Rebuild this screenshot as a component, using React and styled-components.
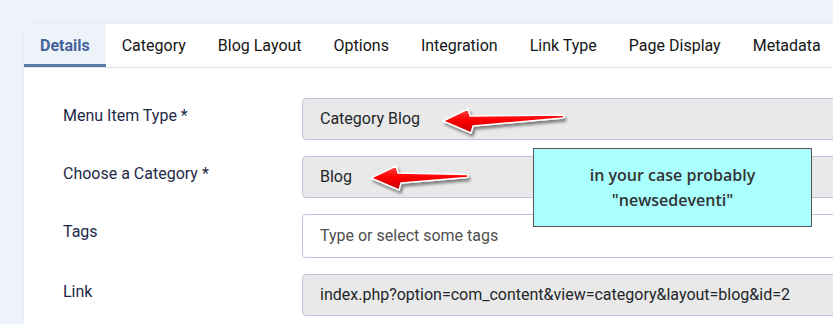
import React from 'react';
import styled, { createGlobalStyle } from 'styled-components';

const GlobalStyle = createGlobalStyle`
  html, body {
    margin: 0;
    background: #eef2f9;
    overflow: hidden;
  }
  body {
    font-family: Roboto, "Liberation Sans", sans-serif;
  }
`;

const Page = styled.div`
  padding: 24px 0 0 24px;
  height: 300px;
`;

const Card = styled.div`
  position: relative;
  width: 880px;
  min-height: 320px;
  background: #fff;
  border-radius: 6px 0 0 0;
  box-shadow: 0 0 2px rgba(30, 50, 90, 0.08);
`;

const Tabs = styled.div`
  display: flex;
  height: 43px;
  border-bottom: 1px solid #dde3ec;
`;

const Tab = styled.div`
  display: flex;
  align-items: center;
  padding: 0 16px;
  font-size: 16px;
  font-weight: ${p => (p.active ? 700 : 400)};
  color: ${p => (p.active ? '#44649a' : '#151515')};
  background: ${p => (p.active ? '#eef2f9' : 'transparent')};
  box-shadow: ${p => (p.active ? 'inset 0 -3px 0 #5b79a5' : 'none')};
  border-top-left-radius: ${p => (p.active ? '6px' : '0')};
`;

const Form = styled.div`
  display: grid;
  grid-template-columns: 239px 1fr;
  row-gap: 16px;
  padding: 30px 0 0 39px;
`;

const Label = styled.div`
  padding-top: 6px;
  font-size: 16px;
  line-height: 24px;
  color: #1d2a47;
`;

const Field = styled.div`
  position: relative;
  display: flex;
  align-items: center;
  height: ${p => p.h || 42}px;
  box-sizing: border-box;
  padding: 0 17px;
  border: 1px solid #b9c6db;
  border-radius: 4px;
  background: ${p => (p.readOnly ? '#e9e9e9' : '#fff')};
  font-size: 16px;
  line-height: 24px;
  color: ${p => (p.placeholder ? '#505050' : '#22262a')};
`;

const ArrowSvg = styled.svg`
  position: absolute;
  overflow: visible;
`;

const Note = styled.div`
  position: absolute;
  left: 509px;
  top: 124px;
  width: 279px;
  height: 79px;
  box-sizing: border-box;
  padding-top: 14px;
  border: 1px solid #555;
  background: #aaffff;
  text-align: center;
  font-family: "Open Sans", sans-serif;
  font-weight: 600;
  font-size: 16px;
  line-height: 25px;
  color: #333;
`;

function Arrow({ left, top, length, rise, id }) {
  const L = length;
  const ty = 14 - rise;
  const d = `M2 14 L27 2 L29 9 L${L - 2} ${ty - 1.5} Q${L} ${ty} ${L - 2} ${ty + 1.5} L32 19 L30 26 Z`;
  return (
    <ArrowSvg width={L + 8} height={32} style={{ left, top }}>
      <defs>
        <linearGradient id={`g${id}`} x1="0" y1="0" x2="0" y2="1">
          <stop offset="0" stopColor="#ff4a4a" />
          <stop offset="0.45" stopColor="#ff0000" />
          <stop offset="1" stopColor="#c40000" />
        </linearGradient>
        <filter id={`s${id}`} x="-10%" y="-40%" width="130%" height="200%">
          <feDropShadow dx="2" dy="3" stdDeviation="1.8" floodColor="#000" floodOpacity="0.45" />
        </filter>
      </defs>
      <path d={d} fill={`url(#g${id})`} stroke="#fff" strokeWidth="1.4" strokeLinejoin="round" filter={`url(#s${id})`} />
    </ArrowSvg>
  );
}

const tabs = ['Details', 'Category', 'Blog Layout', 'Options', 'Integration', 'Link Type', 'Page Display', 'Metadata'];

export default function App() {
  return (
    <>
      <GlobalStyle />
      <Page>
        <Card>
          <Tabs>
            {tabs.map((t, i) => (
              <Tab key={t} active={i === 0}>{t}</Tab>
            ))}
          </Tabs>
          <Form>
            <Label>Menu Item Type *</Label>
            <Field readOnly>
              Category Blog
              <Arrow id="a" left={138} top={8} length={124} rise={4.5} />
            </Field>
            <Label>Choose a Category *</Label>
            <Field readOnly>
              Blog
              <Arrow id="b" left={66} top={7} length={100} rise={2} />
            </Field>
            <Label>Tags</Label>
            <Field h={44} placeholder="1">Type or select some tags</Field>
            <Label>Link</Label>
            <Field readOnly>index.php?option=com_content&amp;view=category&amp;layout=blog&amp;id=2</Field>
          </Form>
          <Note>
            in your case probably
            <br />
            "newsedeventi"
          </Note>
        </Card>
      </Page>
    </>
  );
}
